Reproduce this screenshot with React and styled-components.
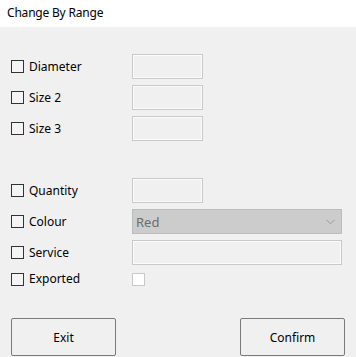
import React from 'react';
import styled, { createGlobalStyle } from 'styled-components';

const GlobalStyle = createGlobalStyle`
  html, body {
    margin: 0;
    padding: 0;
    background: #f0f0f0;
  }
  * {
    box-sizing: border-box;
  }
`;

const Window = styled.div`
  width: 356px;
  height: 357px;
  background: #f0f0f0;
  font-family: "Noto Sans", "Open Sans", sans-serif;
  font-size: 12px;
  color: #000;
  overflow: hidden;
`;

const TitleBar = styled.div`
  height: 27px;
  background: #fff;
  padding: 5px 0 0 7px;
  line-height: 16px;
  letter-spacing: -0.2px;
`;

const Body = styled.div`
  padding: 27px 11px 0 11px;
  display: flex;
  flex-direction: column;
`;

const Group = styled.div`
  display: flex;
  flex-direction: column;
  row-gap: 6px;
  margin-bottom: ${props => props.spacing || 0}px;
`;

const Row = styled.div`
  display: grid;
  grid-template-columns: 121px 1fr;
  align-items: center;
  min-height: ${props => props.compact ? 13 : 25}px;
`;

const CheckLabel = styled.label`
  display: flex;
  align-items: center;
  column-gap: 5px;
  line-height: 16px;
`;

const Box = styled.span`
  width: 13px;
  height: 13px;
  border: 1px solid #333;
  background: #f4f4f4;
  flex: none;
`;

const TextBox = styled.div`
  width: ${props => props.wide ? 210 : 71}px;
  height: 25px;
  border: 1px solid #c9c9c9;
  box-shadow: inset 0 0 0 1px #fbfbfb;
  background: #f0f0f0;
`;

const Select = styled.div`
  width: 210px;
  height: 25px;
  border: 1px solid #bcbcbc;
  background: #cccccc;
  color: #6d6d6d;
  font-size: 13px;
  display: flex;
  align-items: center;
  justify-content: space-between;
  padding: 0 6px 0 3px;
  line-height: 16px;
`;

const SmallCheck = styled.span`
  width: 13px;
  height: 13px;
  border: 1px solid #c8c8c8;
  background: #fff;
`;

const Footer = styled.div`
  display: flex;
  justify-content: space-between;
  margin-top: 31px;
`;

const Button = styled.button`
  width: 105px;
  height: 38px;
  border: 1px solid #7a7a7a;
  border-radius: 2px;
  background: #f0f0f0;
  font-family: inherit;
  font-size: 12px;
  color: #000;
  padding: 0;
`;

const Check = ({ label }) => (
  <CheckLabel>
    <Box />
    {label}
  </CheckLabel>
);

const Chevron = () => (
  <svg width="9" height="6" viewBox="0 0 9 6">
    <path d="M0.5 0.8 L4.5 4.8 L8.5 0.8" fill="none" stroke="#9a9a9a" strokeWidth="1" />
  </svg>
);

const App = () => (
  <Window>
    <GlobalStyle />
    <TitleBar>Change By Range</TitleBar>
    <Body>
      <Group spacing={37}>
        <Row><Check label="Diameter" /><TextBox /></Row>
        <Row><Check label="Size 2" /><TextBox /></Row>
        <Row><Check label="Size 3" /><TextBox /></Row>
      </Group>
      <Group>
        <Row><Check label="Quantity" /><TextBox /></Row>
        <Row>
          <Check label="Colour" />
          <Select>Red<Chevron /></Select>
        </Row>
        <Row><Check label="Service" /><TextBox wide /></Row>
        <Row compact><Check label="Exported" /><SmallCheck /></Row>
      </Group>
      <Footer>
        <Button>Exit</Button>
        <Button>Confirm</Button>
      </Footer>
    </Body>
  </Window>
);

export default App;
